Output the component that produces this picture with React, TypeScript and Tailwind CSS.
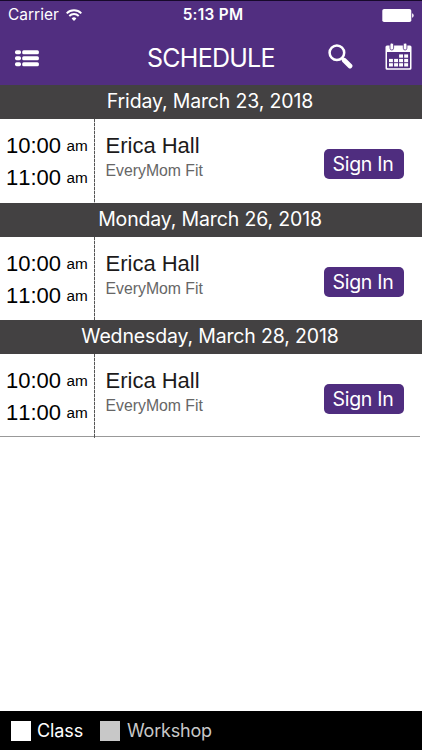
import { useState } from 'react';

interface ScheduleEntry {
  id: number;
  date: string;
  start: string;
  end: string;
  title: string;
  location: string;
}

const entries: ScheduleEntry[] = [
  { id: 1, date: 'Friday, March 23, 2018', start: '10:00', end: '11:00', title: 'Erica Hall', location: 'EveryMom Fit' },
  { id: 2, date: 'Monday, March 26, 2018', start: '10:00', end: '11:00', title: 'Erica Hall', location: 'EveryMom Fit' },
  { id: 3, date: 'Wednesday, March 28, 2018', start: '10:00', end: '11:00', title: 'Erica Hall', location: 'EveryMom Fit' },
];

function WifiIcon() {
  return (
    <svg width="16" height="12" viewBox="0 0 16 12" fill="none" stroke="white" strokeWidth="1.9">
      <path d="M0.7 4.3a10.3 10.3 0 0 1 14.6 0" />
      <path d="M3.3 7a6.6 6.6 0 0 1 9.4 0" />
      <path d="M8 11.9L5.6 9.4a3.4 3.4 0 0 1 4.8 0Z" fill="white" stroke="none" />
    </svg>
  );
}

function BatteryIcon() {
  return (
    <svg width="32" height="13" viewBox="0 0 32 13" fill="white">
      <rect x="0.3" y="0" width="29" height="13" rx="1.8" />
      <path d="M30.1 4.3q1.5 .4 1.5 2.2t-1.5 2.2Z" />
    </svg>
  );
}

function ListIcon() {
  return (
    <svg width="24" height="17" viewBox="0 0 24 17" fill="white">
      {[0.2, 6.2, 12.2].map((y) => (
        <g key={y}>
          <rect x="0" y={y} width="6" height="4" rx="1.7" />
          <rect x="7.2" y={y} width="16.7" height="4" rx="1.5" />
        </g>
      ))}
    </svg>
  );
}

function SearchIcon() {
  return (
    <svg width="25" height="25" viewBox="0 0 25 25" fill="none" stroke="white">
      <circle cx="8.9" cy="8.7" r="7.3" strokeWidth="2.5" />
      <path d="M14 14l2 2" strokeWidth="2.8" />
      <path d="M16.2 16.2l5.8 5.8" strokeWidth="4.8" strokeLinecap="round" />
    </svg>
  );
}

function CalendarIcon() {
  const days = [
    [14.1, 11.4], [19.2, 11.4],
    [4, 15.9], [9.1, 15.9], [14.1, 15.9], [19.2, 15.9],
    [4, 20.2], [9.1, 20.2], [14.1, 20.2], [19.2, 20.2],
  ];
  return (
    <svg width="27" height="27" viewBox="0 0 27 27" fill="white">
      <path
        fillRule="evenodd"
        d="M2 2.4h23a1.5 1.5 0 0 1 1.5 1.5v21.3a1.5 1.5 0 0 1-1.5 1.5H2a1.5 1.5 0 0 1-1.5-1.5V3.9A1.5 1.5 0 0 1 2 2.4ZM2 8.9v15.5q0 .8.8.8h21.4q.8 0 .8-.8V8.9Z"
      />
      <rect x="5" y="0" width="3.6" height="7" rx="1.8" stroke="#512e80" strokeWidth="0.8" />
      <rect x="18.3" y="0" width="3.6" height="7" rx="1.8" stroke="#512e80" strokeWidth="0.8" />
      {days.map(([x, y]) => (
        <rect key={`${x}-${y}`} x={x} y={y} width="3.9" height="3.3" />
      ))}
    </svg>
  );
}

function TimeLabel({ time }: { time: string }) {
  return (
    <div className="flex h-8 pl-1.5 text-[22px] leading-8 text-black [font-kerning:none]">
      <span className="w-[60.5px]">{time}</span>
      <span className="text-[15.3px] leading-[31px]">am</span>
    </div>
  );
}

function EntryRow({ entry }: { entry: ScheduleEntry }) {
  const [signedIn, setSignedIn] = useState(false);

  return (
    <section className="h-[117px] first:h-[118px]">
      <h2 className="h-[34px] bg-[#434142] pr-0.5 text-center font-['Inter',sans-serif] text-[19.5px] leading-[33px] tracking-[-0.15px] text-white">
        {entry.date}
      </h2>
      <div className="flex h-[calc(100%-34px)] font-['Liberation_Sans',sans-serif]">
        <div className="w-[94px] pt-[11px]">
          <TimeLabel time={entry.start} />
          <TimeLabel time={entry.end} />
        </div>
        <div className="w-px bg-[repeating-linear-gradient(to_bottom,#555_0_3px,#ccc_3px_4px)]" />
        <div className="flex-1 pt-3 pl-[10.5px]">
          <div className="text-[22px] leading-[30px] text-[#1c1a1b]">{entry.title}</div>
          <div className="text-[15.8px] leading-5 text-[#666]">{entry.location}</div>
        </div>
        <button
          onClick={() => setSignedIn(!signedIn)}
          aria-pressed={signedIn}
          className="mt-[30px] mr-[18px] h-[30px] w-20 rounded-[5px] bg-[#4f2d7f] pr-0.5 font-['Inter',sans-serif] text-[19.5px] leading-[30px] tracking-[-0.3px] text-white"
        >
          Sign In
        </button>
      </div>
    </section>
  );
}

export default function App() {
  return (
    <div className="flex h-[750px] w-[422px] flex-col overflow-hidden bg-white font-['Inter',sans-serif]">
      <header className="h-[85px] border-t border-[#17092b] bg-[#512e80] text-white">
        <div className="grid h-7 grid-cols-3 items-center pr-2 pl-2">
          <div className="flex items-center gap-[7px] text-[15.5px]">
            <span>Carrier</span>
            <WifiIcon />
          </div>
          <span className="pl-1 text-center text-[15.3px] font-semibold tracking-[0.3px]">5:13 PM</span>
          <div className="flex justify-end">
            <BatteryIcon />
          </div>
        </div>
        <div className="flex h-14 items-center pt-[3px] pr-2.5 pl-[15px]">
          <button aria-label="Menu">
            <ListIcon />
          </button>
          <h1 className="ml-[108px] w-[128px] pt-px text-[25px] tracking-[-0.75px] whitespace-nowrap">SCHEDULE</h1>
          <button aria-label="Search" className="mb-[5px] ml-[53px]">
            <SearchIcon />
          </button>
          <button aria-label="Calendar" className="mb-[5px] ml-auto">
            <CalendarIcon />
          </button>
        </div>
      </header>

      <main className="flex-1">
        <div>
          {entries.map((entry) => (
            <EntryRow key={entry.id} entry={entry} />
          ))}
        </div>
        {/* closing rule, with the time divider running just past it */}
        <div className="-mt-px mr-0.5 h-px bg-[#999]" />
        <div className="ml-[94px] h-px w-px bg-[#666]" />
      </main>

      <footer className="flex h-[39px] items-center bg-black pl-[11px] text-[18px]">
        <span className="size-5 bg-white" />
        <span className="ml-[6px] w-[47px] tracking-[-0.1px] text-white">Class</span>
        <span className="ml-4 size-5 bg-[#c8c8c8]" />
        <span className="ml-[7px] tracking-[-0.2px] text-[#c8c8c8]">Workshop</span>
      </footer>
    </div>
  );
}
